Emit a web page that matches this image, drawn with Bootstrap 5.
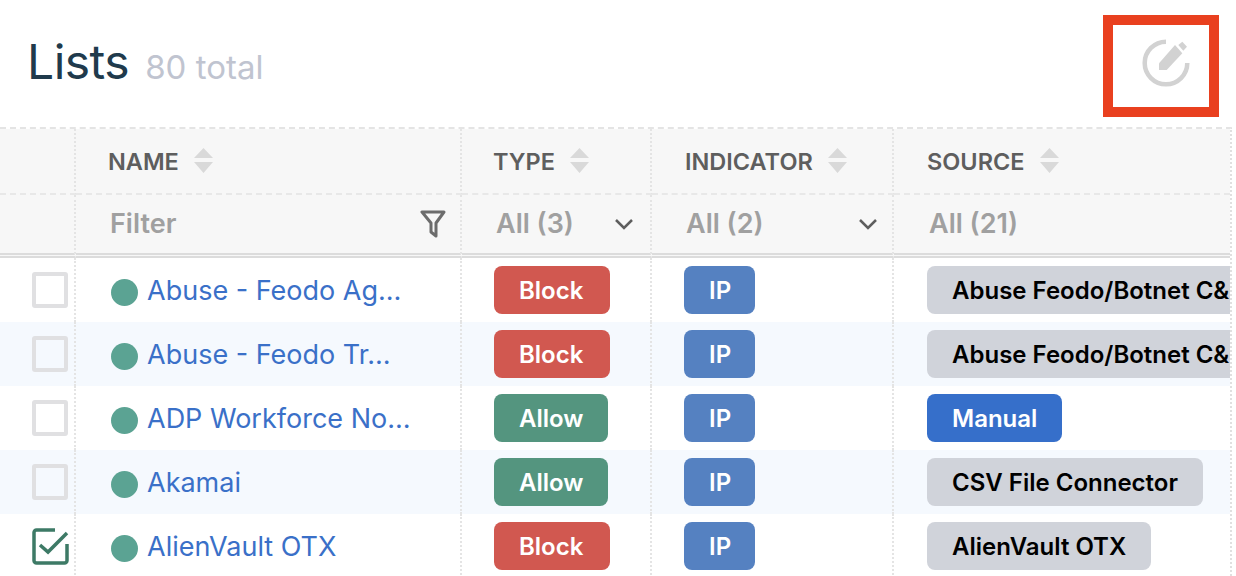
<!DOCTYPE html>
<html lang="en">
<head>
    <meta charset="UTF-8">
    <meta name="viewport" content="width=device-width, initial-scale=1.0">
    <title>Lists</title>
    <link href="https://cdn.jsdelivr.net/npm/bootstrap@5.3.3/dist/css/bootstrap.min.css" rel="stylesheet">
    <style>
        html, body { height: 576px; overflow: hidden; }
        body { font-family: "Inter", "Liberation Sans", sans-serif; background: #fff; }
        .page-head { height: 127px; padding-left: 27px; padding-right: 17px; padding-top: 15px; }
        .page-title { font-size: 48px; line-height: 1; color: #203a4c; font-weight: 400; margin: 0; letter-spacing: -0.5px; }
        .page-count { font-size: 33px; line-height: 1; color: #c0c4d0; margin-left: 16px; font-weight: 400; }
        .title-row { padding-top: 23px; }
        .edit-btn { width: 116px; height: 102px; border: 10px solid #e9401f; background: #fff; padding: 0; }
        .edit-btn svg { display: block; margin: 13px 0 0 28px; }
        .list-wrap { border-top: 2px dashed #e4e4e4; width: 1232px; border-right: 2px dotted #e0e0e0; height: 449px; overflow: hidden; }
        .list-table { table-layout: fixed; width: 1230px; margin: 0; border-collapse: separate; border-spacing: 0; }
        .list-table th, .list-table td { padding: 0; border: 0; border-right: 2px dotted #e4e4e4; vertical-align: middle; box-shadow: none; background: transparent; overflow: hidden; white-space: nowrap; }
        .list-table tr > :last-child { border-right: 0; }
        .head-row th { height: 66px; background: #f7f7f7; border-bottom: 2px dashed #e8e8e8; font-size: 23.5px; font-weight: 600; color: #5e5e5e; padding-left: 32px; padding-top: 2px; }
        .head-row th:nth-child(3) { padding-left: 31px; }
        .head-row th:nth-child(4) { padding-left: 33px; }
        .head-row th:nth-child(5) { padding-left: 33px; }
        .filter-row td { height: 63px; background: #f7f7f7; border-bottom: 5px double #dcdcdc; font-size: 27px; font-weight: 600; color: #a0a0a0; padding: 0 14px 0 34px; }
        .filter-row td:nth-child(3) { padding-right: 16px; }
        .filter-row td:nth-child(5) { padding-left: 35px; }
        .body-row td { height: 64px; background: #fff; }
        .body-row.alt td { background: #f5f9fe; }
        .body-row td:nth-child(3) { padding-left: 32px; }
        .body-row td:nth-child(4) { padding-left: 32px; }
        .body-row td:nth-child(5) { padding-left: 33px; }
        .sort-icon { margin-left: 15px; vertical-align: -3px; }
        .check-box { width: 36px; height: 36px; border: 4px solid #e0e0e2; border-radius: 3px; margin-left: 32px; background: transparent; }
        .check-on { display: block; margin-left: 32px; }
        .name-cell { padding-left: 35px !important; }
        .status-dot { width: 27px; height: 27px; border-radius: 50%; background: #5ba393; flex: none; margin-right: 9px; margin-top: 4px; }
        .name-link { color: #3a70c8; font-size: 27px; text-decoration: none; display: block; padding-top: 2px; }
        .tag { display: inline-block; height: 48px; line-height: 49px; border-radius: 8px; font-size: 24px; font-weight: 600; padding: 0 25px; color: #fff; vertical-align: middle; }
        .tag-block { background: #d15850; padding-right: 27px; }
        .tag-allow { background: #54957f; }
        .tag-ip { background: #5581c1; padding-right: 24px; }
        .tag-manual { background: #366fca; }
        .tag-src { background: #d0d3da; color: #000; }
    </style>
</head>
<body>
    <div class="page-head d-flex justify-content-between align-items-start">
        <div class="title-row d-flex align-items-baseline">
            <h1 class="page-title">Lists</h1>
            <span class="page-count">80 total</span>
        </div>
        <button class="edit-btn d-flex align-items-start" type="button" aria-label="Edit">
            <svg width="50" height="50" viewBox="0 0 50 50">
                <path d="M25 3.700A21.300 21.300 0 1 0 46.300 25" fill="none" stroke="#d2d2d2" stroke-width="4.500"/>
                <path d="M18 25.300L34 7l7.300 8.300L25.700 32H18z" fill="#d2d2d2"/>
                <path d="M37.300 7l4-3.300 4.700 5-3.700 4z" fill="#d2d2d2"/>
            </svg>
        </button>
    </div>
    <div class="list-wrap">
        <table class="table list-table">
            <colgroup>
                <col style="width:76px"><col style="width:386px"><col style="width:190px"><col style="width:242px"><col style="width:336px">
            </colgroup>
            <thead>
                <tr class="head-row">
                    <th></th>
                    <th>NAME<svg class="sort-icon" width="19" height="25" viewBox="0 0 19 25"><path d="M9.500 0L19 10H0zM0 14h19l-9.500 11z" fill="#d9d9d9"/></svg></th>
                    <th>TYPE<svg class="sort-icon" width="19" height="25" viewBox="0 0 19 25"><path d="M9.500 0L19 10H0zM0 14h19l-9.500 11z" fill="#d9d9d9"/></svg></th>
                    <th>INDICATOR<svg class="sort-icon" width="19" height="25" viewBox="0 0 19 25"><path d="M9.500 0L19 10H0zM0 14h19l-9.500 11z" fill="#d9d9d9"/></svg></th>
                    <th>SOURCE<svg class="sort-icon" width="19" height="25" viewBox="0 0 19 25"><path d="M9.500 0L19 10H0zM0 14h19l-9.500 11z" fill="#d9d9d9"/></svg></th>
                </tr>
                <tr class="filter-row">
                    <td></td>
                    <td><div class="d-flex justify-content-between align-items-center">Filter
                        <svg width="26" height="28" viewBox="0 0 26 28"><path d="M2 2h22l-8 11v13l-5-4v-9z" fill="none" stroke="#6c6c6c" stroke-width="3" stroke-linejoin="round"/></svg></div></td>
                    <td><div class="d-flex justify-content-between align-items-center">All (3)
                        <svg width="20" height="12" viewBox="0 0 20 12"><path d="M2 2l8 8 8-8" fill="none" stroke="#5e5e5e" stroke-width="2.500"/></svg></div></td>
                    <td><div class="d-flex justify-content-between align-items-center">All (2)
                        <svg width="20" height="12" viewBox="0 0 20 12"><path d="M2 2l8 8 8-8" fill="none" stroke="#5e5e5e" stroke-width="2.500"/></svg></div></td>
                    <td>All (21)</td>
                </tr>
            </thead>
            <tbody>
                <tr class="body-row">
                    <td><div class="check-box"></div></td>
                    <td class="name-cell"><div class="d-flex align-items-center"><span class="status-dot"></span><a class="name-link" href="#">Abuse - Feodo Ag…</a></div></td>
                    <td><span class="tag tag-block">Block</span></td>
                    <td><span class="tag tag-ip">IP</span></td>
                    <td><span class="tag tag-src">Abuse Feodo/Botnet C&amp;C</span></td>
                </tr>
                <tr class="body-row alt">
                    <td><div class="check-box"></div></td>
                    <td class="name-cell"><div class="d-flex align-items-center"><span class="status-dot"></span><a class="name-link" href="#">Abuse - Feodo Tr…</a></div></td>
                    <td><span class="tag tag-block">Block</span></td>
                    <td><span class="tag tag-ip">IP</span></td>
                    <td><span class="tag tag-src">Abuse Feodo/Botnet C&amp;C</span></td>
                </tr>
                <tr class="body-row">
                    <td><div class="check-box"></div></td>
                    <td class="name-cell"><div class="d-flex align-items-center"><span class="status-dot"></span><a class="name-link" href="#">ADP Workforce No…</a></div></td>
                    <td><span class="tag tag-allow">Allow</span></td>
                    <td><span class="tag tag-ip">IP</span></td>
                    <td><span class="tag tag-manual">Manual</span></td>
                </tr>
                <tr class="body-row alt">
                    <td><div class="check-box"></div></td>
                    <td class="name-cell"><div class="d-flex align-items-center"><span class="status-dot"></span><a class="name-link" href="#">Akamai</a></div></td>
                    <td><span class="tag tag-allow">Allow</span></td>
                    <td><span class="tag tag-ip">IP</span></td>
                    <td><span class="tag tag-src">CSV File Connector</span></td>
                </tr>
                <tr class="body-row">
                    <td><svg class="check-on" width="37" height="37" viewBox="0 0 37 37"><path d="M23 2H4.500A2.500 2.500 0 0 0 2 4.500V32.500A2.500 2.500 0 0 0 4.500 35H32.500A2.500 2.500 0 0 0 35 32.500V16" fill="none" stroke="#3d7a66" stroke-width="3.500"/><path d="M8 17l8 7L35 5" fill="none" stroke="#3d7a66" stroke-width="3.500"/></svg></td>
                    <td class="name-cell"><div class="d-flex align-items-center"><span class="status-dot"></span><a class="name-link" href="#">AlienVault OTX</a></div></td>
                    <td><span class="tag tag-block">Block</span></td>
                    <td><span class="tag tag-ip">IP</span></td>
                    <td><span class="tag tag-src">AlienVault OTX</span></td>
                </tr>
            </tbody>
        </table>
    </div>
    <script src="https://cdn.jsdelivr.net/npm/bootstrap@5.3.3/dist/js/bootstrap.bundle.min.js"></script>
</body>
</html>
